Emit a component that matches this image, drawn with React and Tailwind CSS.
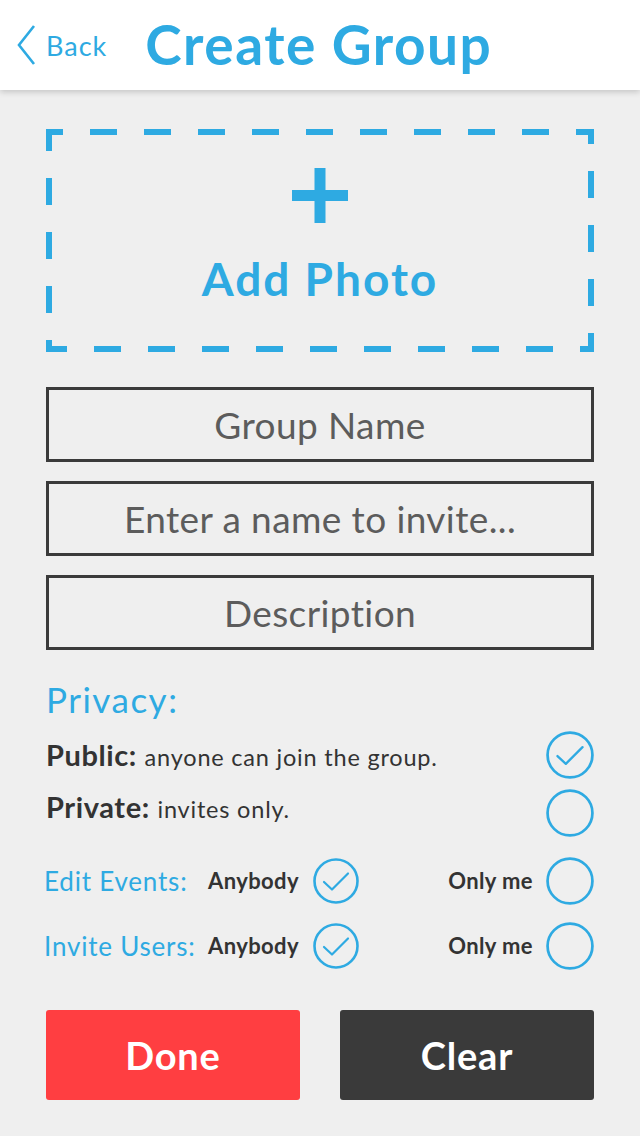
import React, { useState } from 'react';

const font = { fontFamily: 'Lato, "Open Sans", sans-serif' };

const Check = ({ on, size = 46, onClick }) => (
  <button onClick={onClick} className="shrink-0">
    <svg width={size} height={size} viewBox="0 0 46 46" className="block">
      <circle cx="23" cy="23" r="21.5" fill="none" stroke="#2eaae2" strokeWidth="2.6" />
      {on && <path d="M11 24 L19 31.5 L35 15.5" fill="none" stroke="#2eaae2" strokeWidth="2.2" strokeLinecap="round" strokeLinejoin="round" />}
    </svg>
  </button>
);

const Field = ({ placeholder }) => (
  <input
    placeholder={placeholder}
    className="w-full h-[75px] border-[3px] border-[#3a3a3a] bg-transparent text-center text-[37px] tracking-[0.4px] text-[#555] placeholder:text-[#5c5c5c] outline-none"
    style={font}
  />
);

const PermRow = ({ label, value, onChange }) => (
  <div className="flex items-center h-[48px]">
    <div className="w-[164px] text-[26px] tracking-[0.8px] text-[#2eaae2] -ml-[2px] leading-none">{label}</div>
    <div className="text-[22px] font-bold tracking-[0.4px] text-[#333] w-[105px] leading-none">Anybody</div>
    <Check size={46} on={value === 'any'} onClick={() => onChange('any')} />
    <div className="flex-1" />
    <div className="text-[22px] font-bold tracking-[0.4px] text-[#333] leading-none mr-[13px]">Only me</div>
    <Check size={48} on={value === 'me'} onClick={() => onChange('me')} />
  </div>
);

export default function App() {
  const [privacy, setPrivacy] = useState('public');
  const [edit, setEdit] = useState('any');
  const [invite, setInvite] = useState('any');

  return (
    <div className="w-[640px] h-[1136px] bg-[#efefef] overflow-hidden" style={font}>
      {/* header */}
      <div className="h-[90px] bg-white flex items-center shadow-[0_2px_6px_rgba(0,0,0,0.18)] relative z-10">
        <button className="flex items-center ml-[16px] text-[#2eaae2]">
          <svg width="20" height="42" viewBox="0 0 20 42" className="block">
            <path d="M18 2 L3 21 L18 40" fill="none" stroke="#2eaae2" strokeWidth="2.6" />
          </svg>
          <span className="ml-[10px] text-[27px] tracking-[1px] leading-none">Back</span>
        </button>
        <h1 className="ml-[38px] text-[55px] font-bold text-[#2eaae2] leading-none tracking-[1.5px] pb-[2px]">Create Group</h1>
      </div>

      <div className="px-[46px]">
        {/* add photo */}
        <button className="relative mt-[39px] w-[548px] h-[223px] flex flex-col items-center pt-[39px]">
          <svg width="548" height="223" className="absolute inset-0">
            <rect x="3" y="3" width="542" height="217" fill="none" stroke="#2eaae2" strokeWidth="6" strokeDasharray="27 27" strokeDashoffset="13" />
          </svg>
          <svg width="56" height="55" viewBox="0 0 56 55" className="block">
            <rect x="22.5" y="0" width="11" height="55" fill="#2eaae2" />
            <rect x="0" y="22" width="56" height="11" fill="#2eaae2" />
          </svg>
          <span className="mt-[33px] text-[46px] font-bold tracking-[2px] text-[#2eaae2] leading-none">Add Photo</span>
        </button>

        {/* fields */}
        <div className="mt-[35px] flex flex-col gap-[19px]">
          <Field placeholder="Group Name" />
          <Field placeholder="Enter a name to invite..." />
          <Field placeholder="Description" />
        </div>

        {/* privacy */}
        <div className="mt-[32px] text-[35px] tracking-[1.5px] text-[#2eaae2] leading-none">Privacy:</div>

        <div className="mt-[14px] flex items-center justify-between h-[48px]">
          <div className="text-[#333] leading-none">
            <span className="text-[29px] font-bold tracking-[0.6px]">Public: </span>
            <span className="text-[23.5px] tracking-[0.8px]">anyone can join the group.</span>
          </div>
          <Check size={48} on={privacy === 'public'} onClick={() => setPrivacy('public')} />
        </div>
        <div className="mt-[10px] flex items-center justify-between h-[48px]">
          <div className="text-[#333] leading-none -mt-[12px]">
            <span className="text-[29px] font-bold tracking-[0.6px]">Private: </span>
            <span className="text-[23.5px] tracking-[0.8px]">invites only.</span>
          </div>
          <Check size={48} on={privacy === 'private'} onClick={() => setPrivacy('private')} />
        </div>

        <div className="mt-[20px] flex flex-col gap-[17px]">
          <PermRow label="Edit Events:" value={edit} onChange={setEdit} />
          <PermRow label="Invite Users:" value={invite} onChange={setInvite} />
        </div>

        {/* actions */}
        <div className="mt-[40px] flex justify-between">
          <button className="w-[254px] h-[90px] rounded-[3px] bg-[#ff3e41] text-white text-[38px] tracking-[0.8px] font-bold">Done</button>
          <button className="w-[254px] h-[90px] rounded-[3px] bg-[#3a3a3a] text-white text-[38px] tracking-[0.8px] font-bold">Clear</button>
        </div>
      </div>
    </div>
  );
}
